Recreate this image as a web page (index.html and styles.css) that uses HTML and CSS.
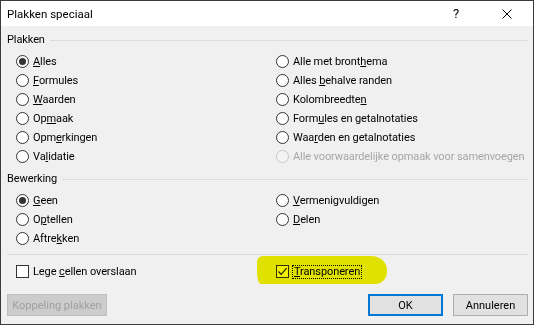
FILE: index.html
```html
<!DOCTYPE html>
<html lang="nl">
<head>
<meta charset="utf-8">
<title>Plakken speciaal</title>
<link rel="stylesheet" href="styles.css">
</head>
<body>
<div class="dialog">
  <div class="titlebar">
    <span class="title">Plakken speciaal</span>
    <span class="tb-help">?</span>
    <span class="tb-close"><svg width="10" height="10" viewBox="0 0 10 10"><path d="M0.5 0.5 L9.5 9.5 M9.5 0.5 L0.5 9.5" stroke="#000" stroke-width="1" fill="none"/></svg></span>
  </div>
  <div class="content">
    <div class="group-label"><span>Plakken</span><span class="line"></span></div>
    <div class="options">
      <label class="opt"><span class="radio checked"></span><span><u>A</u>lles</span></label>
      <label class="opt"><span class="radio"></span><span>Alle met bront<u>h</u>ema</span></label>
      <label class="opt"><span class="radio"></span><span><u>F</u>ormules</span></label>
      <label class="opt"><span class="radio"></span><span>Alles <u>b</u>ehalve randen</span></label>
      <label class="opt"><span class="radio"></span><span><u>W</u>aarden</span></label>
      <label class="opt"><span class="radio"></span><span>Kolombreedte<u>n</u></span></label>
      <label class="opt"><span class="radio"></span><span>Op<u>m</u>aak</span></label>
      <label class="opt"><span class="radio"></span><span>Form<u>u</u>les en getalnotaties</span></label>
      <label class="opt"><span class="radio"></span><span>Opm<u>e</u>rkingen</span></label>
      <label class="opt"><span class="radio"></span><span>Waa<u>r</u>den en getalnotaties</span></label>
      <label class="opt"><span class="radio"></span><span>Va<u>l</u>idatie</span></label>
      <label class="opt disabled"><span class="radio"></span><span>Alle voorwaardelijke opmaak voor samenvoegen</span></label>
    </div>
    <div class="group-label second"><span>Bewerking</span><span class="line"></span></div>
    <div class="options">
      <label class="opt"><span class="radio checked"></span><span><u>G</u>een</span></label>
      <label class="opt"><span class="radio"></span><span><u>V</u>ermenigvuldigen</span></label>
      <label class="opt"><span class="radio"></span><span>O<u>p</u>tellen</span></label>
      <label class="opt"><span class="radio"></span><span><u>D</u>elen</span></label>
      <label class="opt"><span class="radio"></span><span>Aftre<u>k</u>ken</span></label>
    </div>
    <div class="separator"></div>
    <div class="options checks">
      <label class="opt"><span class="checkbox"></span><span>Lege <u>c</u>ellen overslaan</span></label>
      <label class="opt marked"><span class="checkbox"><svg width="11" height="11" viewBox="0 0 11 11"><path d="M1.5 5.5 L4.2 8.3 L9.6 2.2" stroke="#222" stroke-width="1.2" fill="none"/></svg></span><span class="focus"><u>T</u>ransponeren</span><span class="highlight"></span></label>
    </div>
    <div class="buttons">
      <button class="btn disabled-btn">Koppeling plakken</button>
      <button class="btn default-btn">OK</button>
      <button class="btn">Annuleren</button>
    </div>
  </div>
</div>
</body>
</html>
```
FILE: styles.css
```css
* { box-sizing: border-box; margin: 0; padding: 0; }
html, body { width: 534px; height: 325px; overflow: hidden; }
body {
  font-family: Roboto, "Noto Sans", sans-serif;
  font-size: 11px;
  letter-spacing: -0.1px;
  color: #000;
  background: #f0f0f0;
}
.dialog {
  width: 534px;
  height: 325px;
  border: 1px solid #3b3b3b;
  background: #f0f0f0;
  display: flex;
  flex-direction: column;
}
.titlebar {
  height: 25px;
  flex: none;
  background: #fff;
  display: flex;
  align-items: center;
  padding-left: 6px;
}
.title { flex: 1; font-size: 11.5px; letter-spacing: 0; }
.tb-help {
  width: 30px;
  text-align: center;
  font-size: 13px;
}
.tb-close {
  width: 30px;
  display: flex;
  justify-content: center;
  margin-left: 21px;
  margin-right: 11px;
}
.content {
  flex: 1;
  padding: 6px 5px 0 6px;
  display: flex;
  flex-direction: column;
}
.group-label {
  height: 16px;
  line-height: 16px;
  display: flex;
  align-items: center;
}
.group-label .line {
  flex: 1;
  height: 1px;
  background: #dcdcdc;
  margin-left: 5px;
}
.group-label.second { margin-top: 5px; }
.options {
  margin-top: 4px;
  margin-left: 9px;
  display: grid;
  grid-template-columns: 260px 1fr;
  grid-auto-rows: 19px;
}
.opt {
  display: flex;
  align-items: center;
  gap: 4px;
  white-space: nowrap;
  position: relative;
}
.radio {
  width: 13px;
  height: 13px;
  flex: none;
  border: 1px solid #333;
  border-radius: 50%;
  background: #fff;
  display: flex;
  align-items: center;
  justify-content: center;
}
.radio.checked::after {
  content: "";
  width: 7px;
  height: 7px;
  border-radius: 50%;
  background: #333;
}
.opt.disabled { color: #a6a6a6; }
.opt.disabled .radio { border-color: #c6c6c6; background: #f4f4f4; }
.separator {
  height: 1px;
  background: #dcdcdc;
  margin-top: 6px;
}
.checks { margin-top: 7px; }
.checkbox {
  width: 13px;
  height: 13px;
  flex: none;
  border: 1px solid #333;
  background: #fff;
  display: flex;
  align-items: center;
  justify-content: center;
}
.focus {
  border: 1px dotted #000;
  line-height: 12px;
  padding: 0 1px;
  margin-left: -1px;
}
.highlight {
  position: absolute;
  left: -19px;
  top: -6px;
  width: 130px;
  height: 28px;
  background: #f0f000;
  border-radius: 6px 16px 12px 4px / 6px 14px 12px 12px;
  mix-blend-mode: multiply;
  pointer-events: none;
}
.buttons {
  margin-top: 13px;
  display: flex;
  gap: 10px;
}
.btn {
  height: 22px;
  width: 75px;
  font-family: inherit;
  font-size: 11px;
  white-space: nowrap;
  color: #000;
  background: #e1e1e1;
  border: 1px solid #adadad;
}
.disabled-btn {
  width: 100px;
  margin-right: auto;
  background: #cccccc;
  border-color: #bfbfbf;
  color: #a0a0a0;
}
.default-btn {
  border: 2px solid #0078d7;
}
```
